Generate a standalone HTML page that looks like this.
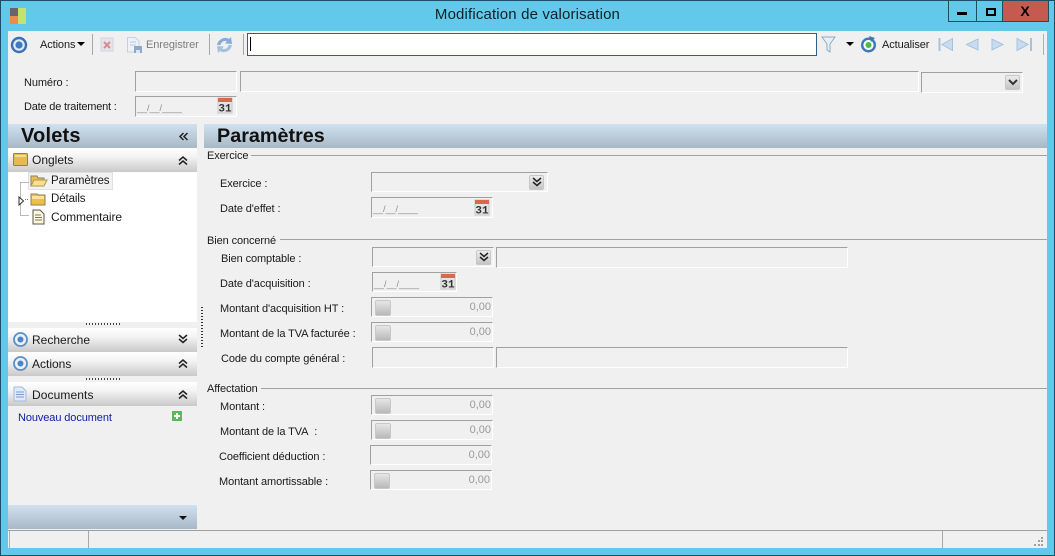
<!DOCTYPE html>
<html><head><meta charset="utf-8"><style>
html,body{margin:0;padding:0;width:1055px;height:556px;overflow:hidden;background:#62c9ea}
*{box-sizing:border-box}
#w{position:relative;width:1055px;height:556px;background:#62c9ea;border:1px solid #1d4f63;overflow:hidden;font:11px "Liberation Sans",sans-serif;color:#1a1a1a}
#w>*{position:absolute}
#c{left:7px;top:30px;width:1039px;height:517px;background:#f0f0f0}
.t{white-space:nowrap;line-height:14px;letter-spacing:-.1px}
.f{background:#f0f0f0;border-top:1px solid #a0a0a0;border-left:1px solid #a0a0a0;border-right:1px solid #fff;border-bottom:1px solid #fff}
.n{color:#9a9a9a;font-size:11px;white-space:nowrap;line-height:14px}
.m{color:#8a8a8a;font-size:9px;white-space:nowrap;line-height:14px}
.h{background:linear-gradient(#d0e1f0,#a9b8c5)}
.b{background:linear-gradient(#fff 0,#f4f4f4 35%,#c9c9c9 100%)}
.btn{width:16px;height:16px;border:1px solid #c8c8c8;border-radius:2px;background:linear-gradient(#e6e6e6,#b8b8b8)}
.dd{width:15px;height:15px;border:1px solid #c8c8c8;border-radius:2px;background:linear-gradient(#ececec,#c4c4c4)}
.l{height:1px;background:#a0a0a0}
svg{position:absolute;overflow:visible}
</style></head><body><div id="w">
<div id="c"></div>
<!-- title -->
<svg style="left:9px;top:6px" width="17" height="18"><rect x="0" y="1" width="8" height="8" fill="#666"/><rect x="0" y="9" width="8" height="8" fill="#f08a4a"/><rect x="8" y="1" width="8" height="16" fill="#c4e26e"/></svg>
<div class="t" style="left:0;top:6px;width:1053px;text-align:center;font-size:15px;line-height:16px;letter-spacing:.15px;color:#10202a">Modification de valorisation</div>
<div style="left:947px;top:-1px;width:29px;height:22px;border:1px solid #1d4f63;background:#62c9ea"></div>
<div style="left:975px;top:-1px;width:27px;height:22px;border:1px solid #1d4f63;background:#62c9ea"></div>
<div style="left:1001px;top:-1px;width:47px;height:22px;border:1px solid #1d4f63;background:#c75a50"></div>
<div style="left:956px;top:11px;width:10px;height:3px;background:#000"></div>
<div style="left:985px;top:7px;width:10px;height:8px;border:2px solid #000"></div>
<div class="t" style="left:1014px;top:3px;width:20px;text-align:center;font-weight:bold;font-size:14px;color:#000">X</div>
<!-- toolbar -->
<svg style="left:9px;top:35px" width="18" height="18"><circle cx="9" cy="9" r="7" fill="#dfe9f5" stroke="#3a6fb0" stroke-width="2.400"/><circle cx="9" cy="9" r="3.600" fill="#3f79c4"/></svg>
<div class="t" style="left:39px;top:37px">Actions</div>
<svg style="left:76px;top:41px" width="8" height="5"><path d="M0 0H8L4 4Z" fill="#000"/></svg>
<div style="left:91px;top:33px;width:1px;height:21px;background:#a8a8a8"></div>
<svg style="left:99px;top:36px" width="15" height="15"><rect x="1" y="1" width="12" height="13" fill="#e4e4ea" stroke="#d4d4dc"/><path d="M4 5L10 11M10 5L4 11" stroke="#d88c90" stroke-width="2"/></svg>
<svg style="left:125px;top:35px" width="18" height="18"><path d="M1.500 1.500H9L13 5V16H1.500Z" fill="#eef2f8" stroke="#c4d0e0"/><path d="M4 6H10M4 9H10" stroke="#b8c8dc"/><rect x="8" y="10" width="8" height="7" fill="#8fa6cf"/><rect x="10" y="14" width="4" height="3" fill="#dde5f2"/></svg>
<div class="t" style="left:145px;top:37px;color:#7d7d7d">Enregistrer</div>
<div style="left:208px;top:33px;width:1px;height:21px;background:#a8a8a8"></div>
<svg style="left:215px;top:36px" width="17" height="17"><path d="M1 8C2 2 9 -1 13 2L15 0L16 7L9 6.500L11 4.500C8 3 5 5 4.500 8Z" fill="#84acd6"/><path d="M16 8C15 14 8 17 4 14L2 16L1 9L8 9.500L6 11.500C9 13 12 11 12.500 8Z" fill="#a4c2e0"/></svg>
<div style="left:242px;top:33px;width:1px;height:21px;background:#a8a8a8"></div>
<div style="left:246px;top:32px;width:570px;height:23px;background:#fff;border:1px solid #2f5f86"></div>
<div style="left:249px;top:36px;width:1px;height:14px;background:#000"></div>
<svg style="left:820px;top:35px" width="16" height="18"><path d="M1 1H14L9 8V16L6 14V8Z" fill="#e8f0f6" stroke="#8eaac0"/></svg>
<svg style="left:845px;top:41px" width="8" height="5"><path d="M0 0H8L4 4Z" fill="#000"/></svg>
<svg style="left:859px;top:35px" width="17" height="17"><circle cx="8.500" cy="9" r="6.300" fill="#fff" stroke="#3a78b8" stroke-width="2.400"/><circle cx="8.500" cy="9" r="3" fill="#4cb848"/><path d="M9 0L15 2L11 6Z" fill="#3a78b8"/></svg>
<div class="t" style="left:881px;top:37px">Actualiser</div>
<svg style="left:937px;top:36px" width="95" height="15"><g fill="#c7dcf1" stroke="#a9c2dc"><path d="M1.500 1V14" stroke-width="2"/><path d="M14.500 1.500V13.500L4 7.500Z"/><path d="M40 2V13L28.500 7.500Z"/><path d="M54 2V13L65 7.500Z"/><path d="M79 1.500V13.500L90 7.500Z"/><path d="M93 1V14" stroke-width="2"/></g></svg>
<div style="left:1042px;top:33px;width:1px;height:21px;background:#b0b0b0"></div>
<!-- header fields -->
<div class="t" style="left:23px;top:75px">Numéro :</div>
<div class="t" style="left:23px;top:99px;letter-spacing:-.2px">Date de traitement :</div>
<div class="f" style="left:134px;top:70px;width:102px;height:21px"></div>
<div class="f" style="left:239px;top:70px;width:679px;height:21px"></div>
<div class="f" style="left:920px;top:71px;width:102px;height:21px"></div>
<div class="dd" style="left:1004px;top:74px"></div>
<svg style="left:1007px;top:78px" width="10" height="7"><path d="M1 1L5 5L9 1" fill="none" stroke="#333" stroke-width="2"/></svg>
<div class="f" style="left:134px;top:95px;width:102px;height:21px"></div>
<div class="m" style="left:136px;top:100px">__/__/____</div>
<svg style="left:216px;top:96px" width="16" height="16"><rect x="1" y="1" width="14" height="15" fill="#e4e4e4" stroke="#c8c8c8"/><rect x="1" y="1" width="14" height="4" fill="#d9694a"/><text x="8" y="14.500" text-anchor="middle" font-size="11" font-weight="bold" font-family="Liberation Mono" fill="#333">31</text></svg>
<!-- left pane -->
<div class="h" style="left:7px;top:123px;width:189px;height:24px"></div>
<div class="t" style="left:20px;top:124px;font-size:20px;line-height:22px;font-weight:bold;color:#111;letter-spacing:.2px">Volets</div>
<svg style="left:178px;top:131px" width="10" height="9"><path d="M4.500 1L1 4.500L4.500 8M8.500 1L5 4.500L8.500 8" fill="none" stroke="#222" stroke-width="1.500"/></svg>
<div class="b" style="left:7px;top:147px;width:189px;height:24px"></div>
<svg style="left:12px;top:151px" width="15" height="15"><rect x="0.500" y="1.500" width="14" height="12" rx="1" fill="#e8b94e" stroke="#8c8258"/><rect x="2" y="3" width="11" height="2" fill="#f6dc8e"/></svg>
<div class="t" style="left:31px;top:152px;font-size:12px;letter-spacing:0">Onglets</div>
<svg style="left:177px;top:155px" width="10" height="10"><path d="M1 4.500L5 1L9 4.500M1 8.500L5 5L9 8.500" fill="none" stroke="#222" stroke-width="1.500"/></svg>
<div style="left:7px;top:171px;width:189px;height:150px;background:#fff"></div>
<div style="left:27px;top:171px;width:85px;height:18px;background:#f2f2f2;border:1px solid #e0e0e0"></div>
<svg style="left:17px;top:178px" width="14" height="42" shape-rendering="crispEdges"><path d="M2.500 3.500H11M2.500 3.500V36.500H11" fill="none" stroke="#777" stroke-dasharray="1 1"/><path d="M7 20.500H11" fill="none" stroke="#777" stroke-dasharray="1 1"/></svg>
<svg style="left:17px;top:195px" width="7" height="10"><path d="M1 1V9L5.500 5Z" fill="#fff" stroke="#333"/></svg>
<svg style="left:29px;top:173px" width="18" height="14"><path d="M1 2H7L8 4H14V12H1Z" fill="#eebd52" stroke="#8c8258"/><path d="M1 12L4 6H17L14 12Z" fill="#fbe08c" stroke="#a89660"/></svg>
<svg style="left:29px;top:191px" width="17" height="14"><path d="M1 2H7L8 3H15V13H1Z" fill="#efbe4a" stroke="#8c8258"/><rect x="2" y="4" width="12" height="3" fill="#fbe59c"/></svg>
<svg style="left:31px;top:208px" width="13" height="16"><path d="M1 1H8L12 5V15H1Z" fill="#fff8d8" stroke="#555"/><path d="M3 6H9M3 8.500H10M3 11H10" stroke="#777"/></svg>
<div class="t" style="left:50px;top:173px;font-size:11.500px">Paramètres</div>
<div class="t" style="left:50px;top:191px;font-size:11.500px">Détails</div>
<div class="t" style="left:50px;top:209px;font-size:12px">Commentaire</div>
<div style="left:85px;top:322px;width:36px;height:2px;background:repeating-linear-gradient(90deg,#444 0 1px,transparent 1px 3px)"></div>
<div class="b" style="left:7px;top:327px;width:189px;height:24px"></div>
<svg style="left:11px;top:330px" width="17" height="17"><circle cx="8.500" cy="8.500" r="6.500" fill="#e8f0fa" stroke="#5c8ec4" stroke-width="1.800"/><circle cx="8.500" cy="8.500" r="3" fill="#4b84c8"/></svg>
<div class="t" style="left:31px;top:332px;font-size:12px;letter-spacing:0">Recherche</div>
<svg style="left:177px;top:333px" width="10" height="10"><path d="M1 1L5 4.500L9 1M1 5L5 8.500L9 5" fill="none" stroke="#222" stroke-width="1.500"/></svg>
<div class="b" style="left:7px;top:351px;width:189px;height:24px"></div>
<svg style="left:11px;top:354px" width="17" height="17"><circle cx="8.500" cy="8.500" r="6.500" fill="#e8f0fa" stroke="#5c8ec4" stroke-width="1.800"/><circle cx="8.500" cy="8.500" r="3" fill="#4b84c8"/></svg>
<div class="t" style="left:31px;top:356px;font-size:12px;letter-spacing:0">Actions</div>
<svg style="left:177px;top:358px" width="10" height="10"><path d="M1 4.500L5 1L9 4.500M1 8.500L5 5L9 8.500" fill="none" stroke="#222" stroke-width="1.500"/></svg>
<div style="left:85px;top:377px;width:36px;height:2px;background:repeating-linear-gradient(90deg,#444 0 1px,transparent 1px 3px)"></div>
<div class="b" style="left:7px;top:381px;width:189px;height:24px"></div>
<svg style="left:12px;top:385px" width="15" height="16"><path d="M1 1H9L13 5V15H1Z" fill="#dfe9f8" stroke="#a4bcdc"/><path d="M3 6H11M3 8.500H11M3 11H11" stroke="#7d9ccb"/></svg>
<div class="t" style="left:31px;top:387px;font-size:12px;letter-spacing:.1px">Documents</div>
<svg style="left:177px;top:389px" width="10" height="10"><path d="M1 4.500L5 1L9 4.500M1 8.500L5 5L9 8.500" fill="none" stroke="#222" stroke-width="1.500"/></svg>
<div class="t" style="left:17px;top:410px;color:#0b1fa0">Nouveau document</div>
<svg style="left:171px;top:410px" width="11" height="11"><rect width="10" height="10" fill="#5cb85c"/><path d="M5 2V8M2 5H8" stroke="#fff" stroke-width="2"/></svg>
<div class="h" style="left:7px;top:504px;width:189px;height:24px"></div>
<svg style="left:178px;top:515px" width="9" height="5"><path d="M0 0H8L4 4Z" fill="#111"/></svg>
<div style="left:200px;top:306px;width:2px;height:40px;background:repeating-linear-gradient(#333 0 1px,transparent 1px 3px)"></div>
<!-- right -->
<div class="h" style="left:203px;top:123px;width:843px;height:24px"></div>
<div class="t" style="left:216px;top:124px;font-size:19.800px;line-height:22px;font-weight:bold;color:#111;letter-spacing:0">Paramètres</div>
<div class="t" style="left:206px;top:148px">Exercice</div><div class="l" style="left:250px;top:154px;width:796px"></div>
<div class="t" style="left:219px;top:176px">Exercice :</div>
<div class="f" style="left:370px;top:171px;width:177px;height:20px"></div>
<div class="dd" style="left:528px;top:174px"></div>
<svg style="left:531px;top:176px" width="10" height="10"><path d="M1 1L5 4.500L9 1M1 5L5 8.500L9 5" fill="none" stroke="#222" stroke-width="1.500"/></svg>
<div class="t" style="left:219px;top:201px">Date d'effet :</div>
<div class="f" style="left:370px;top:196px;width:122px;height:21px"></div>
<div class="m" style="left:372px;top:201px">__/__/____</div>
<svg style="left:473px;top:198px" width="16" height="16"><rect x="1" y="1" width="14" height="15" fill="#e4e4e4" stroke="#c8c8c8"/><rect x="1" y="1" width="14" height="4" fill="#d9694a"/><text x="8" y="14.500" text-anchor="middle" font-size="11" font-weight="bold" font-family="Liberation Mono" fill="#333">31</text></svg>
<div class="t" style="left:206px;top:233px">Bien concerné</div><div class="l" style="left:279px;top:238px;width:767px"></div>
<div class="t" style="left:220px;top:251px">Bien comptable :</div>
<div class="f" style="left:371px;top:246px;width:122px;height:20px"></div>
<div class="dd" style="left:475px;top:249px"></div>
<svg style="left:478px;top:251px" width="10" height="10"><path d="M1 1L5 4.500L9 1M1 5L5 8.500L9 5" fill="none" stroke="#222" stroke-width="1.500"/></svg>
<div class="f" style="left:495px;top:246px;width:352px;height:21px"></div>
<div class="t" style="left:219px;top:276px">Date d'acquisition :</div>
<div class="f" style="left:371px;top:271px;width:85px;height:20px"></div>
<div class="m" style="left:373px;top:276px">__/__/____</div>
<svg style="left:439px;top:272px" width="16" height="16"><rect x="1" y="1" width="14" height="15" fill="#e4e4e4" stroke="#c8c8c8"/><rect x="1" y="1" width="14" height="4" fill="#d9694a"/><text x="8" y="14.500" text-anchor="middle" font-size="11" font-weight="bold" font-family="Liberation Mono" fill="#333">31</text></svg>
<div class="t" style="left:219px;top:301px">Montant d'acquisition HT :</div>
<div class="f" style="left:370px;top:296px;width:122px;height:20px"></div>
<div class="btn" style="left:374px;top:299px"></div>
<div class="n" style="left:440px;top:299px;width:50px;text-align:right">0,00</div>
<div class="t" style="left:219px;top:326px">Montant de la TVA facturée :</div>
<div class="f" style="left:370px;top:321px;width:122px;height:20px"></div>
<div class="btn" style="left:374px;top:324px"></div>
<div class="n" style="left:440px;top:324px;width:50px;text-align:right">0,00</div>
<div class="t" style="left:220px;top:351px">Code du compte général :</div>
<div class="f" style="left:371px;top:346px;width:122px;height:21px"></div>
<div class="f" style="left:495px;top:346px;width:352px;height:21px"></div>
<div class="t" style="left:206px;top:381px">Affectation</div><div class="l" style="left:260px;top:387px;width:786px"></div>
<div class="t" style="left:219px;top:399px">Montant :</div>
<div class="f" style="left:370px;top:394px;width:122px;height:20px"></div>
<div class="btn" style="left:374px;top:397px"></div>
<div class="n" style="left:440px;top:397px;width:50px;text-align:right">0,00</div>
<div class="t" style="left:219px;top:424px">Montant de la TVA&nbsp; :</div>
<div class="f" style="left:370px;top:419px;width:122px;height:20px"></div>
<div class="btn" style="left:374px;top:422px"></div>
<div class="n" style="left:440px;top:422px;width:50px;text-align:right">0,00</div>
<div class="t" style="left:218px;top:449px">Coefficient déduction :</div>
<div class="f" style="left:369px;top:444px;width:122px;height:20px"></div>
<div class="n" style="left:439px;top:447px;width:50px;text-align:right">0,00</div>
<div class="t" style="left:218px;top:474px">Montant amortissable :</div>
<div class="f" style="left:369px;top:469px;width:122px;height:20px"></div>
<div class="btn" style="left:373px;top:472px"></div>
<div class="n" style="left:439px;top:472px;width:50px;text-align:right">0,00</div>
<!-- status -->
<div style="left:7px;top:529px;width:1039px;height:1px;background:#a0a0a0"></div>
<div style="left:8px;top:530px;width:1px;height:17px;background:#b0b0b0"></div>
<div style="left:87px;top:530px;width:1px;height:17px;background:#a8a8a8"></div>
<div style="left:941px;top:530px;width:1px;height:17px;background:#a8a8a8"></div>
<svg style="left:1032px;top:535px" width="12" height="11"><g fill="#a0a0a0"><rect x="8" y="1" width="2" height="2"/><rect x="5" y="4" width="2" height="2"/><rect x="8" y="4" width="2" height="2"/><rect x="1" y="8" width="2" height="2"/><rect x="5" y="8" width="2" height="2"/><rect x="8" y="8" width="2" height="2"/></g></svg>
</div></body></html>
